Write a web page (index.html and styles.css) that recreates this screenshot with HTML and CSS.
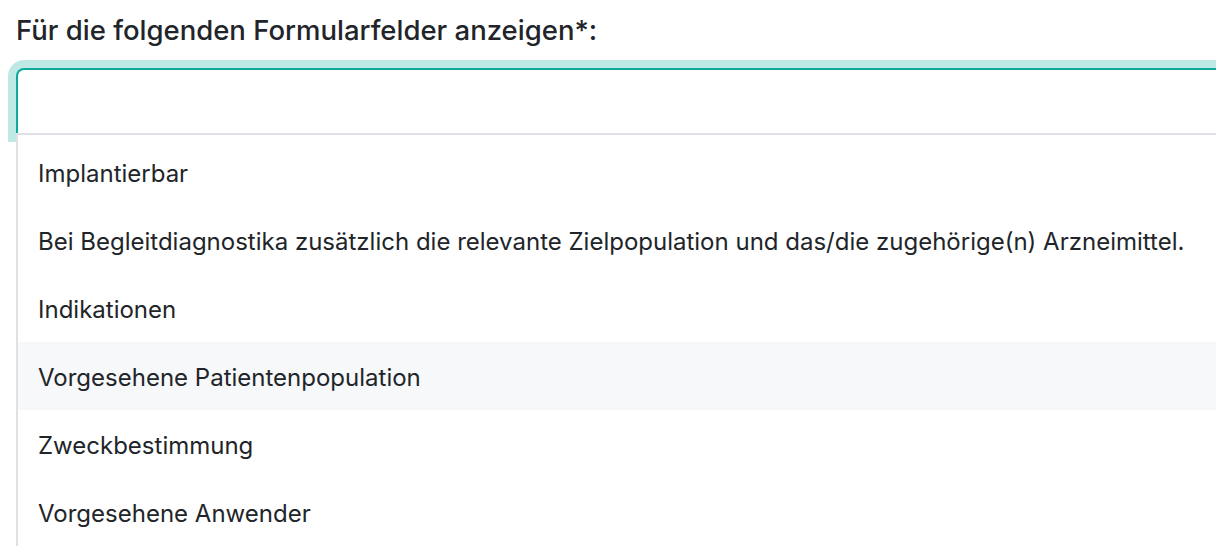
FILE: index.html
```html
<!DOCTYPE html>
<html lang="de">
<head>
<meta charset="utf-8">
<title>Formularfelder</title>
<link rel="stylesheet" href="styles.css">
</head>
<body>
<div class="field">
  <label class="field-label">Für die folgenden Formularfelder anzeigen*:</label>
  <div class="select">
    <div class="select-control"></div>
    <div class="select-menu">
      <div class="option">Implantierbar</div>
      <div class="option">Bei Begleitdiagnostika zusätzlich die relevante Zielpopulation und das/die zugehörige(n) Arzneimittel.</div>
      <div class="option">Indikationen</div>
      <div class="option active">Vorgesehene Patientenpopulation</div>
      <div class="option">Zweckbestimmung</div>
      <div class="option">Vorgesehene Anwender</div>
    </div>
  </div>
</div>
</body>
</html>
```

FILE: styles.css
```css
html, body {
  margin: 0;
  padding: 0;
  background: #ffffff;
  overflow: hidden;
}
body {
  font-family: Inter, "Noto Sans", "Liberation Sans", sans-serif;
  color: #212529;
}
.field {
  padding: 9px 0 0 16px;
  width: 1400px;
}
.field-label {
  display: block;
  font-size: 27.5px;
  line-height: 42px;
  font-weight: 500;
  margin-bottom: 17px;
}
.select {
  display: flex;
  flex-direction: column;
}
.select-control {
  height: 64px;
  border: 2px solid #0fa89b;
  border-bottom: none;
  border-radius: 8px 8px 0 0;
  background: #ffffff;
  box-shadow: 0 0 0 8px #bfe9e5;
}
.select-menu {
  position: relative;
  margin-top: -1px;
  border: 2px solid #dee2e6;
  border-bottom: none;
  padding-top: 3px;
  background: #ffffff;
}
.option {
  box-sizing: border-box;
  height: 68px;
  display: flex;
  align-items: center;
  padding: 3px 0 0 20px;
  font-size: 24px;
  line-height: 30px;
  white-space: nowrap;
}
.option.active {
  background: #f7f8fa;
}
```
